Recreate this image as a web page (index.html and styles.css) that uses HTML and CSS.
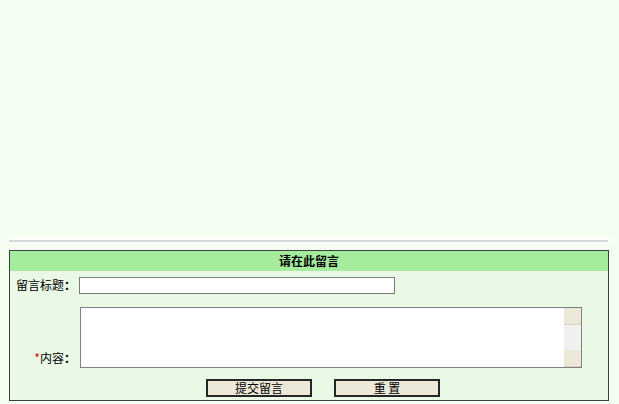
FILE: index.html
```html
<!DOCTYPE html>
<html lang="zh-CN">
<head>
<meta charset="utf-8">
<title>留言</title>
<link rel="stylesheet" href="styles.css">
</head>
<body>
<div class="top"></div>
<div class="strip"><div class="rule"></div></div>
<form class="box">
  <div class="head">请在此留言</div>
  <div class="body">
    <label class="lab lab1">留言标题<span class="colon">：</span></label>
    <div class="cell1"><input class="title" type="text"></div>
    <label class="lab lab2"><span class="req">*</span>内容<span class="colon">：</span></label>
    <div class="cell2">
      <div class="area">
        <textarea class="txt"></textarea>
        <div class="sb">
          <div class="sbbtn"></div>
          <div class="sbtrack"></div>
          <div class="sbbtn"></div>
        </div>
      </div>
    </div>
    <div class="btns">
      <button type="button" class="btn">提交留言</button>
      <button type="button" class="btn">重 置</button>
    </div>
  </div>
</form>
</body>
</html>
```
FILE: styles.css
```css
html, body {
  margin: 0;
  padding: 0;
  background: #f4fff2;
  font-family: "Noto Sans CJK SC", "Liberation Sans", sans-serif;
  font-size: 12px;
  color: #000;
}
.top {
  height: 237px;
}
.strip {
  margin-left: 6px;
  width: 606px;
  height: 7px;
  background: #fdfffc;
  padding-top: 3px;
  box-sizing: border-box;
}
.rule {
  margin-left: 3px;
  width: 599px;
  height: 2px;
  background: #d6d6d6;
}
.box {
  display: block;
  margin: 6px 0 0 9px;
  width: 600px;
  border: 1px solid #3e3e3e;
  box-sizing: border-box;
  background: #e9f9e6;
}
.head {
  height: 20px;
  line-height: 20px;
  background: #a6ec9e;
  text-align: center;
  font-weight: bold;
  font-size: 12px;
}
.body {
  display: grid;
  grid-template-columns: 69px 1fr;
  padding-bottom: 3px;
}
.lab {
  text-align: right;
  white-space: nowrap;
  font-size: 12px;
  padding-right: 3px;
}
.colon {
  font-family: "Noto Sans CJK TC", "Noto Sans CJK SC", sans-serif;
  font-weight: bold;
}
.lab1 {
  padding-top: 5px;
  line-height: 18px;
}
.cell1 {
  padding-top: 6px;
  height: 36px;
  box-sizing: border-box;
}
.title {
  display: block;
  width: 316px;
  height: 17px;
  margin: 0;
  padding: 0;
  border: 1px solid #7a7a7a;
  background: #fff;
  box-sizing: border-box;
}
.lab2 {
  align-self: end;
  line-height: 18px;
  padding-bottom: 1px;
}
.req {
  color: #e00000;
}
.area {
  margin-left: 1px;
  width: 502px;
  height: 61px;
  border: 1px solid #808080;
  box-sizing: border-box;
  background: #fff;
  display: flex;
}
.txt {
  flex: 1;
  border: 0;
  margin: 0;
  padding: 0;
  resize: none;
  background: #fff;
  outline: none;
}
.sb {
  width: 17px;
  display: flex;
  flex-direction: column;
}
.sbbtn {
  height: 17px;
  background: #ece8d8;
  border-bottom: 1px solid #d8d4c4;
  box-sizing: border-box;
}
.sbtrack {
  flex: 1;
  background: #f0f0ee;
}
.btns {
  grid-column: 1 / 3;
  display: flex;
  gap: 22px;
  padding: 11px 0 0 196px;
}
.btn {
  width: 106px;
  height: 18px;
  margin: 0;
  padding: 0;
  border: 2px solid #262626;
  background: #ece9d8;
  font-family: "Noto Sans CJK SC", "Liberation Sans", sans-serif;
  font-size: 12px;
  line-height: 14px;
  color: #000;
}
```
